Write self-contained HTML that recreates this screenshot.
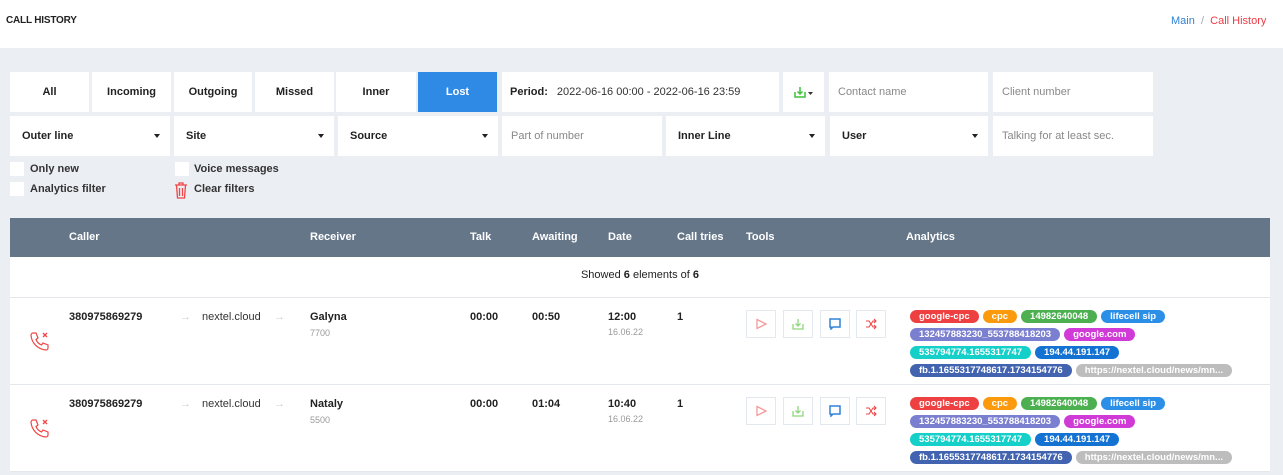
<!DOCTYPE html>
<html><head><meta charset="utf-8"><style>
*{box-sizing:border-box;margin:0;padding:0}
body{width:1283px;height:475px;overflow:hidden;background:#ebeef3;font-family:"Liberation Sans",sans-serif;font-size:11px;color:#222;position:relative}
.a{position:absolute}
.hdr{left:0;top:0;width:1283px;height:48px;background:#fff}
.box{position:absolute;background:#fff;height:40px;display:flex;align-items:center;font-weight:bold;font-size:11px}
.c{justify-content:center}
.ph{color:#888;font-weight:normal;padding-left:9px}
.dd{padding-left:12px;justify-content:space-between;padding-right:10px}
.dd:after{content:"";border-left:3px solid transparent;border-right:3px solid transparent;border-top:4px solid #222}
.cb{position:absolute;width:14px;height:14px;background:#fff}
.lbl{position:absolute;font-size:11px;font-weight:bold;color:#333}
.th{left:10px;top:218px;width:1260px;height:39px;background:#657689}
.th span{position:absolute;top:13px;color:#fff;font-weight:bold;font-size:11px}
.row{position:absolute;left:10px;width:1260px;background:#fff;border-bottom:1px solid #e4e7ec}
.b{position:absolute;font-weight:bold;font-size:11px;color:#222}
.s{position:absolute;font-size:9px;color:#999}
.tb{position:absolute;width:30px;height:28px;border:1px solid #e3e7ee;background:#fff;display:flex;align-items:center;justify-content:center}
.tags{position:absolute;left:900px;width:360px}
.tag{display:inline-block;height:13px;line-height:13px;border-radius:7px;color:#fff;font-weight:bold;font-size:9.5px;padding:0 9px;margin:0 4px 5px 0;white-space:nowrap;vertical-align:top}
</style></head><body>
<div class="a hdr"></div>
<div class="a" style="left:6px;top:15px;font-size:10px;font-weight:bold;letter-spacing:-0.2px">CALL HISTORY</div>
<div class="a" style="left:1171px;top:15px;font-size:11px"><span style="color:#2f83d8">Main</span> <span style="color:#aaa">&nbsp;/&nbsp;</span> <span style="color:#ef3a45">Call History</span></div>

<div class="box c" style="left:10px;top:72px;width:79px">All</div>
<div class="box c" style="left:92px;top:72px;width:79px">Incoming</div>
<div class="box c" style="left:174px;top:72px;width:78px">Outgoing</div>
<div class="box c" style="left:255px;top:72px;width:79px">Missed</div>
<div class="box c" style="left:336px;top:72px;width:80px">Inner</div>
<div class="box c" style="left:418px;top:72px;width:79px;background:#2f8ae6;color:#fff">Lost</div>
<div class="box" style="left:502px;top:72px;width:277px;padding-left:8px">Period:<span style="font-weight:normal;color:#333;margin-left:9px">2022-06-16 00:00 - 2022-06-16 23:59</span></div>
<div class="box c" style="left:783px;top:72px;width:41px"><svg width="20" height="12" viewBox="0 0 20 12"><path d="M1 6v5h10V6M6 1v7M3.5 5.5L6 8l2.5-2.5" stroke="#3fc43a" stroke-width="1.5" fill="none"/><path d="M14 6h5l-2.5 3z" fill="#333"/></svg></div>
<div class="box ph" style="left:829px;top:72px;width:159px">Contact name</div>
<div class="box ph" style="left:993px;top:72px;width:160px">Client number</div>

<div class="box dd" style="left:10px;top:116px;width:160px">Outer line</div>
<div class="box dd" style="left:174px;top:116px;width:160px">Site</div>
<div class="box dd" style="left:338px;top:116px;width:160px">Source</div>
<div class="box ph" style="left:502px;top:116px;width:160px">Part of number</div>
<div class="box dd" style="left:666px;top:116px;width:159px">Inner Line</div>
<div class="box dd" style="left:830px;top:116px;width:158px">User</div>
<div class="box ph" style="left:993px;top:116px;width:160px">Talking for at least sec.</div>

<div class="cb" style="left:10px;top:162px"></div><div class="lbl" style="left:30px;top:163px">Only new</div>
<div class="cb" style="left:10px;top:182px"></div><div class="lbl" style="left:30px;top:183px">Analytics filter</div>
<div class="cb" style="left:175px;top:162px"></div><div class="lbl" style="left:194px;top:163px">Voice messages</div>
<svg class="a" style="left:174px;top:181px" width="14" height="18" viewBox="0 0 14 18"><path d="M1 4h12M5 4V2h4v2M2.5 4l1 13h7l1-13M5.5 7v8M8.5 7v8" stroke="#ef4545" stroke-width="1.3" fill="none"/></svg>
<div class="lbl" style="left:194px;top:183px">Clear filters</div>

<div class="a th"><span style="left:59px">Caller</span><span style="left:300px">Receiver</span><span style="left:460px">Talk</span><span style="left:522px">Awaiting</span><span style="left:598px">Date</span><span style="left:667px">Call tries</span><span style="left:736px">Tools</span><span style="left:896px">Analytics</span></div>
<div class="row" style="top:257px;height:41px"><div class="a" style="left:0;width:1260px;top:12px;text-align:center">Showed <b>6</b> elements of <b>6</b></div></div>

<div class="row" style="top:298px;height:87px" id="r1"></div>
<div class="row" style="top:385px;height:87px" id="r2"></div>

<script>
function row(id,name,ext,aw,tm){
var r=document.getElementById(id);
r.innerHTML=`
<svg class="a" style="left:19px;top:32px" width="22" height="22" viewBox="0 0 22 22"><path d="M4 3l3 0 2 5-2 1.5c1 2.5 3 4.5 5.5 5.5l1.5-2 5 2 0 3c0 1-1 2-2 2C9 19.5 2.5 13 2 5c0-1 1-2 2-2z" stroke="#ef4545" stroke-width="1.2" fill="none"/><path d="M14 3l4 4M18 3l-4 4" stroke="#ef4545" stroke-width="1.3"/></svg>
<div class="b" style="left:59px;top:13px">380975869279</div>
<div class="a" style="left:170px;top:13px;color:#ccc">&#8594;</div>
<div class="a" style="left:192px;top:13px;color:#333">nextel.cloud</div>
<div class="a" style="left:264px;top:13px;color:#ccc">&#8594;</div>
<div class="b" style="left:300px;top:13px">${name}</div>
<div class="s" style="left:300px;top:30px">${ext}</div>
<div class="b" style="left:460px;top:13px">00:00</div>
<div class="b" style="left:522px;top:13px">${aw}</div>
<div class="b" style="left:598px;top:13px">${tm}</div>
<div class="s" style="left:598px;top:29px">16.06.22</div>
<div class="b" style="left:667px;top:13px">1</div>
<div class="tb" style="left:736px;top:12px"><svg width="12" height="12"><path d="M2 1.5l9 4.5-9 4.5z" stroke="#f59a9a" stroke-width="1.3" fill="none"/></svg></div>
<div class="tb" style="left:773px;top:12px"><svg width="12" height="12"><path d="M1 6v5h10V6M6 1v7M3.5 5.5L6 8l2.5-2.5" stroke="#8fd67c" stroke-width="1.3" fill="none"/></svg></div>
<div class="tb" style="left:810px;top:12px"><svg width="12" height="12"><path d="M1 1h10v8H4l-2 2V9H1z" stroke="#2f83d8" stroke-width="1.5" fill="none"/></svg></div>
<div class="tb" style="left:846px;top:12px"><svg width="12" height="12"><path d="M1 3h3l4 6h3M1 9h3l4-6h3M9 1l2 2-2 2M9 7l2 2-2 2" stroke="#ef4545" stroke-width="1.1" fill="none"/></svg></div>
<div class="tags" style="top:12px">
<span class="tag" style="background:#ee4040">google-cpc</span><span class="tag" style="background:#fa9a0c">cpc</span><span class="tag" style="background:#4caf50">14982640048</span><span class="tag" style="background:#2b8fe8">lifecell sip</span><br>
<span class="tag" style="background:#7b7fd0">132457883230_553788418203</span><span class="tag" style="background:#d03ad6">google.com</span><br>
<span class="tag" style="background:#14d0c8">535794774.1655317747</span><span class="tag" style="background:#1473d2">194.44.191.147</span><br>
<span class="tag" style="background:#4264b0">fb.1.1655317748617.1734154776</span><span class="tag" style="background:#bdbdbd">https://nextel.cloud/news/mn...</span>
</div>`;}
row('r1','Galyna','7700','00:50','12:00');
row('r2','Nataly','5500','01:04','10:40');
</script>
</body></html>
